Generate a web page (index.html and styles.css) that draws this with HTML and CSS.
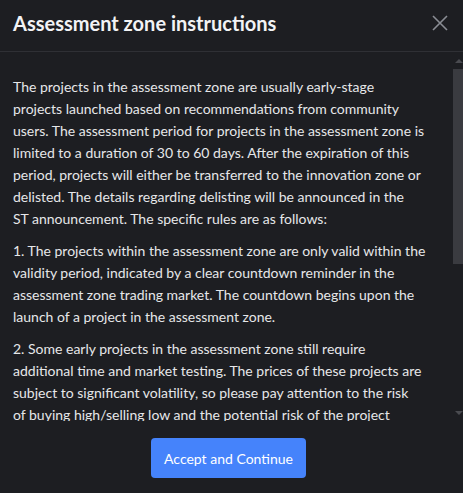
FILE: index.html
```html
<!DOCTYPE html>
<html lang="en">
<head>
  <meta charset="UTF-8" />
  <title>Assessment zone instructions</title>
  <link rel="stylesheet" href="styles.css">
</head>
<body>

  <div class="modal">
    <div class="modal-header">
      <h2>Assessment zone instructions</h2>
      <button class="close" aria-label="Close">
        <svg width="16" height="16" viewBox="0 0 16 16">
          <path d="M1 1 L15 15 M15 1 L1 15" stroke="currentColor" stroke-width="1.6" fill="none" />
        </svg>
      </button>
    </div>

    <div class="modal-body">
      <div class="content">
        <p>The projects in the assessment zone are usually early-stage<br>
          projects launched based on recommendations from community<br>
          users. The assessment period for projects in the assessment zone is<br>
          limited to a duration of 30 to 60 days. After the expiration of this<br>
          period, projects will either be transferred to the innovation zone or<br>
          delisted. The details regarding delisting will be announced in the<br>
          ST announcement. The specific rules are as follows:</p>
        <p>1. The projects within the assessment zone are only valid within the<br>
          validity period, indicated by a clear countdown reminder in the<br>
          assessment zone trading market. The countdown begins upon the<br>
          launch of a project in the assessment zone.</p>
        <p>2. Some early projects in the assessment zone still require<br>
          additional time and market testing. The prices of these projects are<br>
          subject to significant volatility, so please pay attention to the risk<br>
          of buying high/selling low and the potential risk of the project<br>
          being delisted.</p>
        <p>3. Users should fully understand the characteristics of projects in the assessment zone before trading, and make investment decisions carefully according to their own risk tolerance.</p>
      </div>
      <!-- scrollbar drawn by hand, the browser hides the native one -->
      <div class="scrollbar">
        <div class="scroll-btn"><span class="arrow-up"></span></div>
        <div class="track">
          <div class="thumb"></div>
        </div>
        <div class="scroll-btn"><span class="arrow-down"></span></div>
      </div>
    </div>

    <div class="modal-footer">
      <button class="accept">Accept and Continue</button>
    </div>
  </div>

</body>
</html>
```

FILE: styles.css
```css
* {
  box-sizing: border-box;
}

html, body {
  margin: 0;
  height: 100%;
}

body {
  font-family: Lato, 'Open Sans', sans-serif;
  background: #1d1e22;
  color: #e6e7e9;
}

.modal {
  height: 100%;
  display: flex;
  flex-direction: column;
}

.modal-header {
  height: 52px;
  flex-shrink: 0;
  display: flex;
  align-items: center;
  justify-content: space-between;
  padding: 0 15px 6px 13px;
  border-bottom: 1px solid #2f3035;
}

.modal-header h2 {
  margin: 0;
  font-size: 20px;
  font-weight: 700;
  color: #f2f3f5;
}

.close {
  background: none;
  border: none;
  padding: 0;
  color: #8a8d94;
  cursor: pointer;
  display: flex;
}

.modal-body {
  height: 369px;
  flex-shrink: 0;
  display: flex;
}

.content {
  flex: 1;
  min-width: 0;
  overflow: hidden;
  padding: 24px 12px 0 13px;
  font-size: 14px;
  line-height: 22px;
}

.content p {
  margin: 0 0 10px;
}

.scrollbar {
  flex: 0 0 9px;
  display: flex;
  flex-direction: column;
}

.scroll-btn {
  height: 17px;
  display: flex;
  align-items: center;
  justify-content: center;
  padding-left: 2px;
}

.arrow-up,
.arrow-down {
  width: 0;
  height: 0;
  border-left: 4px solid transparent;
  border-right: 4px solid transparent;
}

.arrow-up {
  border-bottom: 4px solid #4a4b50;
}

.arrow-down {
  border-top: 4px solid #4a4b50;
}

.track {
  flex: 1;
}

.thumb {
  width: 100%;
  height: 195px;
  background: #3a3b40;
}

.modal-footer {
  flex: 1;
  display: flex;
  justify-content: center;
  align-items: flex-start;
  padding: 17px 6px 0 0;
}

.accept {
  background-color: #4583fb;
  border: none;
  border-radius: 4px;
  height: 40px;
  padding: 0 13px;
  color: #fff;
  font-family: inherit;
  font-size: 14px;
  cursor: pointer;
}

.accept:hover {
  background-color: #3a74e6;
}
```
